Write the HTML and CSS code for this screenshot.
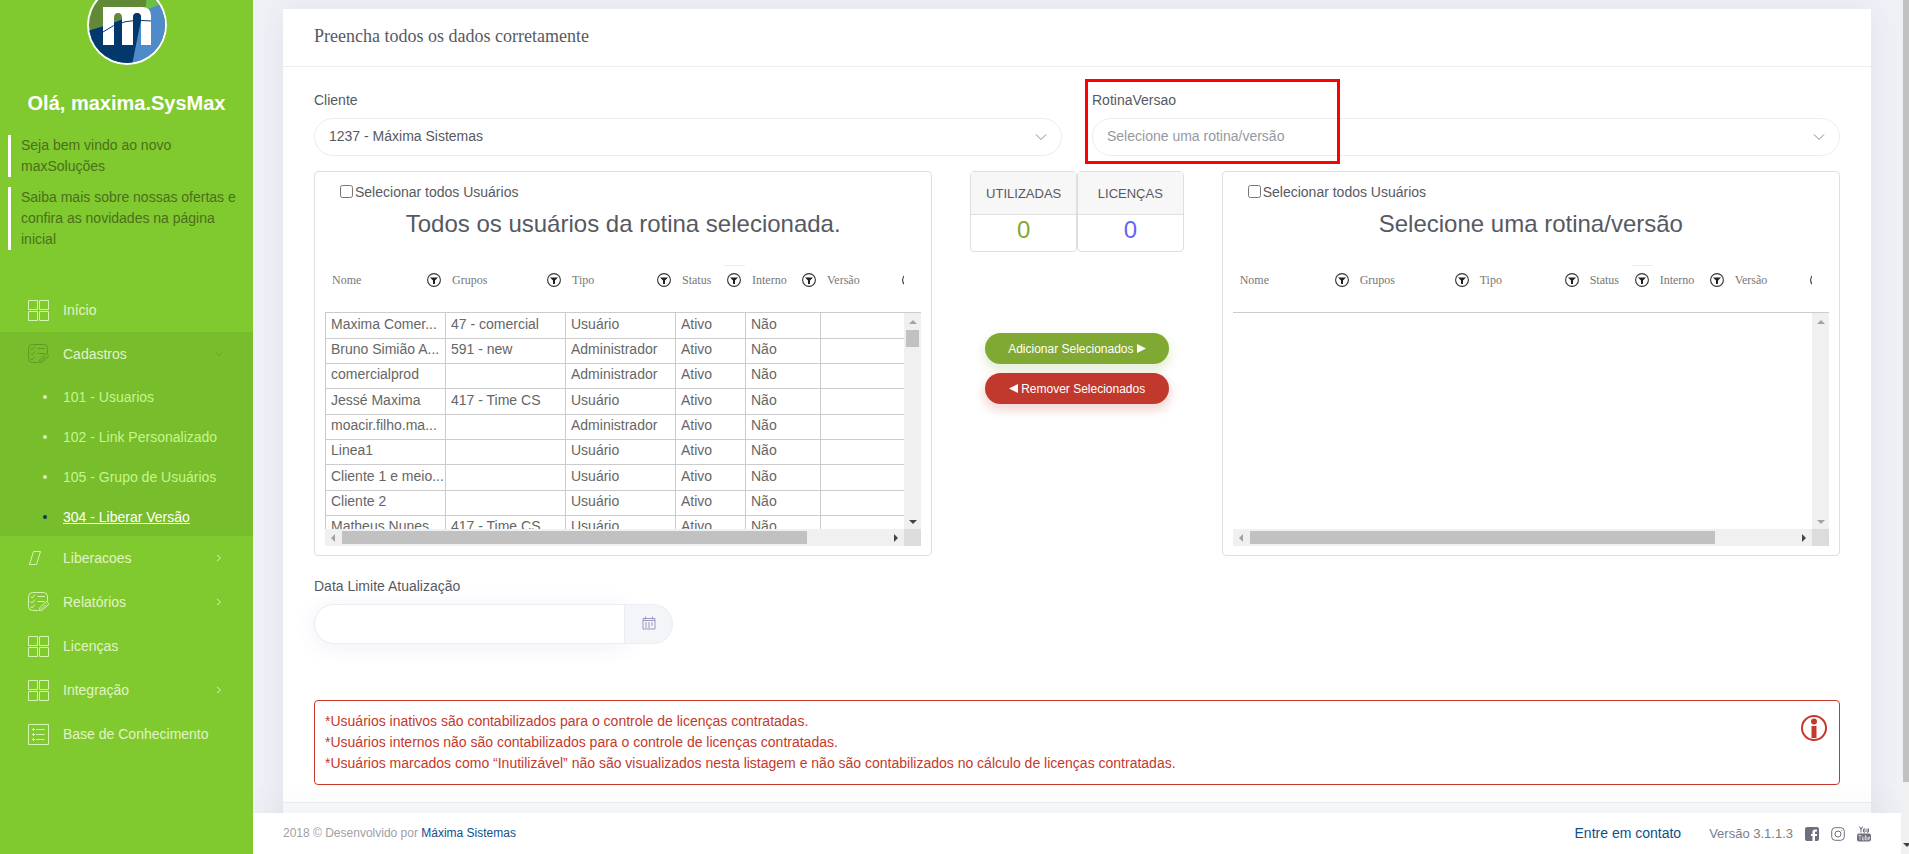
FILE: index.html
```html
<!DOCTYPE html>
<html lang="pt-BR">
  <head>
    <meta charset="UTF-8" />
    <meta name="viewport" content="width=device-width, initial-scale=1.0" />
    <title>304 - Liberar Versão</title>
    <link rel="stylesheet" href="styles.css" />
  </head>
  <body>
    <!-- Ícones reutilizados -->
    <svg class="sprite" aria-hidden="true">
      <symbol id="i-grid" viewBox="0 0 22 22">
        <path d="M1.500 1.500h9v9h-9zM12.500 1.500h9v9h-9zM1.500 12.500h9v9h-9zM12.500 12.500h9v9h-9z" />
      </symbol>
      <symbol id="i-check" viewBox="0 0 22 22">
        <path d="M20.500 10V5.500a4 4 0 0 0-4-4h-11a4 4 0 0 0-4 4v10a4 4 0 0 0 4 4h6M3.500 5.500l1.500 1.500 3-3.500M3.500 10.500l1.500 1.500 3-3.500M3.500 15.500l1.500 1.500 3-3.500M10.500 5.500h7.500M10.500 10.500h7M12.500 19.500l.5-3 5.500-5.500q1.500-1 2.500.5t0 2.500l-5.500 5zM14.500 18l4.500-4.500" />
      </symbol>
      <symbol id="i-slant" viewBox="0 0 22 22">
        <path d="M6.500 4.500h7l-4 13h-7z" />
      </symbol>
      <symbol id="i-list" viewBox="0 0 22 22">
        <path d="M1.500 1.500h20v20h-20zM5 6.500h3M9 6.500h8.500M5 11.500h3M9 11.500h8.500M5 16.500h3M9 16.500h8.500M6.500 5v3M6.500 10v3M6.500 15v3" />
      </symbol>
      <symbol id="i-right" viewBox="0 0 8 8">
        <path d="M2 1l3.500 3L2 7" />
      </symbol>
      <symbol id="i-down" viewBox="0 0 12 8">
        <path d="M1 1.500l5 5 5-5" />
      </symbol>
      <symbol id="i-filter" viewBox="0 0 14 14">
        <circle cx="7" cy="7" r="6.400" fill="none" stroke="#333" stroke-width="1.100" />
        <path d="M3 4.500h8L8 7.500V11H6V7.500z" fill="#222" />
      </symbol>
    </svg>

    <div class="app">
      <aside class="sidebar">
        <svg class="logo" viewBox="0 0 80 80" role="img" aria-label="Máxima">
          <defs>
            <clipPath id="disc"><circle cx="40" cy="40" r="38" /></clipPath>
          </defs>
          <circle cx="40" cy="40" r="40" fill="#fff" />
          <g clip-path="url(#disc)">
            <path d="M0 0h80v80H0z" fill="#628a36" />
            <path d="M61 0h19v22l-22 6z" fill="#6dbf45" />
            <path d="M0 47Q34 34 80 17v63H0z" fill="#4f8aca" />
            <path d="M0 46Q30 38 56 25L45 80H0z" fill="#02386c" />
          </g>
          <path d="M16 22H55q9 0 9 9v29H54V33q0-5-4-5t-4 5v27H35V33q0-5-4-5t-4 5v27H16z" fill="#fff" />
          <path d="M16 47Q36 32 64 36" fill="none" stroke="#02386c" />
          <path d="M46 60V33q0-5 4-5t4 5L48 60z" fill="#02386c" />
        </svg>
        <h2 class="hello">Olá, maxima.SysMax</h2>
        <p class="notice">Seja bem vindo ao novo maxSoluções</p>
        <p class="notice">Saiba mais sobre nossas ofertas e confira as novidades na página inicial</p>

        <nav class="menu">
          <a class="menu-item" href="#"><svg class="menu-icon"><use href="#i-grid" /></svg>Início</a>
          <div class="menu-open">
            <a class="menu-item" href="#"><svg class="menu-icon dark"><use href="#i-check" /></svg>Cadastros<svg class="arrow-down" viewBox="0 0 12 8"><use href="#i-down" /></svg></a>
            <a class="sub-item" href="#">101 - Usuarios</a>
            <a class="sub-item" href="#">102 - Link Personalizado</a>
            <a class="sub-item" href="#">105 - Grupo de Usuários</a>
            <a class="sub-item active" href="#">304 - Liberar Versão</a>
          </div>
          <a class="menu-item" href="#"><svg class="menu-icon"><use href="#i-slant" /></svg>Liberacoes<svg class="arrow"><use href="#i-right" /></svg></a>
          <a class="menu-item" href="#"><svg class="menu-icon"><use href="#i-check" /></svg>Relatórios<svg class="arrow"><use href="#i-right" /></svg></a>
          <a class="menu-item" href="#"><svg class="menu-icon"><use href="#i-grid" /></svg>Licenças</a>
          <a class="menu-item" href="#"><svg class="menu-icon"><use href="#i-grid" /></svg>Integração<svg class="arrow"><use href="#i-right" /></svg></a>
          <a class="menu-item" href="#"><svg class="menu-icon"><use href="#i-list" /></svg>Base de Conhecimento</a>
        </nav>
      </aside>

      <div class="page">
        <main class="content">
          <section class="card">
            <h3 class="card-title">Preencha todos os dados corretamente</h3>
            <form class="card-body">
              <div class="fields">
                <div class="field">
                  <label for="cliente">Cliente</label>
                  <div class="select-box">
                    <select id="cliente">
                      <option>1237 - Máxima Sistemas</option>
                    </select>
                    <svg class="select-arrow"><use href="#i-down" /></svg>
                  </div>
                </div>
                <div class="field">
                  <label for="rotina">RotinaVersao</label>
                  <div class="select-box">
                    <select id="rotina" class="empty">
                      <option>Selecione uma rotina/versão</option>
                    </select>
                    <svg class="select-arrow"><use href="#i-down" /></svg>
                  </div>
                  <div class="highlight"></div>
                </div>
              </div>

              <div class="row">
                <div class="col-5">
                  <div class="panel">
                    <label class="check"><input type="checkbox" />Selecionar todos Usuários</label>
                    <h4 class="panel-title">Todos os usuários da rotina selecionada.</h4>
                    <div class="grid">
                      <div class="grid-view">
                        <table class="users">
                          <colgroup>
                            <col class="w-120" /><col class="w-120" /><col class="w-110" /><col class="w-70" /><col class="w-75" /><col class="w-100" />
                          </colgroup>
                          <thead>
                            <tr>
                              <th><div class="th">Nome<svg><use href="#i-filter" /></svg></div></th>
                              <th><div class="th">Grupos<svg><use href="#i-filter" /></svg></div></th>
                              <th><div class="th">Tipo<svg><use href="#i-filter" /></svg></div></th>
                              <th><div class="th">Status<svg><use href="#i-filter" /></svg></div></th>
                              <th><div class="th">Interno<svg><use href="#i-filter" /></svg></div></th>
                              <th><div class="th">Versão<svg><use href="#i-filter" /></svg></div></th>
                            </tr>
                          </thead>
                          <tbody>
                            <tr><td>Maxima Comer...</td><td>47 - comercial</td><td>Usuário</td><td>Ativo</td><td>Não</td><td></td></tr>
                            <tr><td>Bruno Simião A...</td><td>591 - new</td><td>Administrador</td><td>Ativo</td><td>Não</td><td></td></tr>
                            <tr><td>comercialprod</td><td></td><td>Administrador</td><td>Ativo</td><td>Não</td><td></td></tr>
                            <tr><td>Jessé Maxima</td><td>417 - Time CS</td><td>Usuário</td><td>Ativo</td><td>Não</td><td></td></tr>
                            <tr><td>moacir.filho.ma...</td><td></td><td>Administrador</td><td>Ativo</td><td>Não</td><td></td></tr>
                            <tr><td>Linea1</td><td></td><td>Usuário</td><td>Ativo</td><td>Não</td><td></td></tr>
                            <tr><td>Cliente 1 e meio...</td><td></td><td>Usuário</td><td>Ativo</td><td>Não</td><td></td></tr>
                            <tr><td>Cliente 2</td><td></td><td>Usuário</td><td>Ativo</td><td>Não</td><td></td></tr>
                            <tr><td>Matheus Nunes</td><td>417 - Time CS</td><td>Usuário</td><td>Ativo</td><td>Não</td><td></td></tr>
                          </tbody>
                        </table>
                      </div>
                      <div class="bar-v">
                        <i class="tri up off"></i>
                        <div class="thumb-v"></div>
                        <i class="tri down"></i>
                      </div>
                      <div class="bar-h">
                        <i class="tri left off"></i>
                        <div class="thumb-h"></div>
                        <i class="tri right"></i>
                      </div>
                      <div class="corner"></div>
                    </div>
                  </div>
                </div>

                <div class="col-2">
                  <div class="counts">
                    <div class="count">
                      <div class="count-head">UTILIZADAS</div>
                      <div class="count-value used">0</div>
                    </div>
                    <div class="count">
                      <div class="count-head">LICENÇAS</div>
                      <div class="count-value total">0</div>
                    </div>
                  </div>
                  <div class="actions">
                    <button type="button" class="btn add">Adicionar Selecionados <svg viewBox="0 0 9 9"><path d="M0 0l9 4.500L0 9z" /></svg></button>
                    <button type="button" class="btn remove"><svg viewBox="0 0 9 9"><path d="M9 0L0 4.500 9 9z" /></svg> Remover Selecionados</button>
                  </div>
                </div>

                <div class="col-5">
                  <div class="panel">
                    <label class="check"><input type="checkbox" />Selecionar todos Usuários</label>
                    <h4 class="panel-title">Selecione uma rotina/versão</h4>
                    <div class="grid">
                      <div class="grid-view">
                        <table class="users">
                          <colgroup>
                            <col class="w-120" /><col class="w-120" /><col class="w-110" /><col class="w-70" /><col class="w-75" /><col class="w-100" />
                          </colgroup>
                          <thead>
                            <tr>
                              <th><div class="th">Nome<svg><use href="#i-filter" /></svg></div></th>
                              <th><div class="th">Grupos<svg><use href="#i-filter" /></svg></div></th>
                              <th><div class="th">Tipo<svg><use href="#i-filter" /></svg></div></th>
                              <th><div class="th">Status<svg><use href="#i-filter" /></svg></div></th>
                              <th><div class="th">Interno<svg><use href="#i-filter" /></svg></div></th>
                              <th><div class="th">Versão<svg><use href="#i-filter" /></svg></div></th>
                            </tr>
                          </thead>
                        </table>
                      </div>
                      <div class="bar-v">
                        <i class="tri up off"></i>
                        <i class="tri down off"></i>
                      </div>
                      <div class="bar-h">
                        <i class="tri left off"></i>
                        <div class="thumb-h"></div>
                        <i class="tri right"></i>
                      </div>
                      <div class="corner"></div>
                    </div>
                  </div>
                </div>
              </div>

              <div class="date-field">
                <label for="data">Data Limite Atualização</label>
                <div class="date-group">
                  <input type="text" id="data" />
                  <button type="button" class="date-btn" aria-label="Abrir calendário">
                    <svg viewBox="0 0 14 14">
                      <path d="M1 2.500h12v10.500H1zM1 4.500h12M3.500 .5v3M10.500 .5v3" />
                      <path class="dots" d="M3 7h8M3 9h8M3 11h6" />
                    </svg>
                  </button>
                </div>
              </div>

              <div class="alert">
                <div>
                  <p>*Usuários inativos são contabilizados para o controle de licenças contratadas.</p>
                  <p>*Usuários internos não são contabilizados para o controle de licenças contratadas.</p>
                  <p>*Usuários marcados como “Inutilizável” não são visualizados nesta listagem e não são contabilizados no cálculo de licenças contratadas.</p>
                </div>
                <svg class="info" viewBox="0 0 26 26">
                  <circle cx="13" cy="13" r="12" fill="none" stroke="#c5392c" stroke-width="2" />
                  <circle cx="13" cy="6.500" r="3" />
                  <path d="M10.500 11h5v12h-5z" />
                </svg>
              </div>
            </form>
            <div class="card-foot"></div>
          </section>
        </main>

        <footer class="footer">
          <span class="copy">2018 © Desenvolvido por <a href="#">Máxima Sistemas</a></span>
          <a class="contact" href="#">Entre em contato</a>
          <span class="version">Versão 3.1.1.3</span>
          <a class="social" href="#" aria-label="Facebook">
            <svg viewBox="0 0 14 14"><path d="M2 0h10q2 0 2 2v10q0 2-2 2h-2V9h2V7h-2V5.500q0-1 1-1h1v-2h-2q-2.500 0-2.500 2.500V7H6v2h1.500v5H2q-2 0-2-2V2q0-2 2-2z" /></svg>
          </a>
          <a class="social" href="#" aria-label="Instagram">
            <svg class="line" viewBox="0 0 14 14"><rect x=".7" y=".7" width="12.600" height="12.600" rx="3.500" /><circle cx="7" cy="7" r="3" /><path d="M10.300 3.500h.8" /></svg>
          </a>
          <a class="social" href="#" aria-label="YouTube">
            <svg viewBox="0 0 14 16">
              <path d="M2 7.500h10q2 0 2 2v4q0 2-2 2H2q-2 0-2-2v-4q0-2 2-2z" />
              <path class="thin" d="M2.500 .5l1.500 3 1.500-3M4 3.500v3M6.500 3q1-1 1.500 0v3q-1 1-1.500 0zM10 2.500v3.500q1 1 1.500 0V2.500" />
              <path class="cut" d="M1.500 9.500h3M3 9.500v4.500M5.500 10.500v3.500h1.500v-3.500M8.500 9v5h1.500v-3h-1.500M12.500 14h-1v-3h1v1.500h-1" />
            </svg>
          </a>
        </footer>
      </div>

      <div class="page-bar"><div class="page-thumb"></div><i class="tri down"></i></div>
    </div>
  </body>
</html>
```

FILE: styles.css
```css
* {
  box-sizing: border-box;
}

body {
  margin: 0;
  font-family: "Liberation Sans", Arial, sans-serif;
  font-size: 14px;
  line-height: 21px;
  color: #575962;
  background: #f0f1f7;
}

h2,
h3,
h4,
p {
  margin: 0;
  font-weight: normal;
}

a {
  text-decoration: none;
}

button,
input,
select {
  font-family: inherit;
  font-size: inherit;
  color: inherit;
}

.sprite {
  display: none;
}

.app {
  display: grid;
  grid-template-columns: 253px 1fr 8px;
  height: 100vh;
  overflow: hidden;
}

/* Menu lateral */
.sidebar {
  position: relative;
  z-index: 1;
  background: #80c92f;
  overflow: hidden;
}

.logo {
  display: block;
  width: 80px;
  height: 80px;
  margin: -15px auto 0;
}

.hello {
  margin: 22px 0 16px;
  font-size: 20px;
  line-height: 32px;
  font-weight: bold;
  text-align: center;
  color: #fff;
}

.notice {
  margin: 0 8px 10px;
  padding-left: 10px;
  border-left: 3px solid #fff;
  color: #4a701c;
}

.menu {
  margin-top: 38px;
}

.menu-item {
  display: flex;
  align-items: center;
  height: 44px;
  padding: 0 30px 0 27px;
  color: #e0f4c6;
}

.menu-icon {
  width: 22px;
  height: 22px;
  margin-right: 14px;
  fill: none;
  stroke: #d6f3b4;
}

.menu-icon.dark {
  stroke: #5f9b22;
}

.arrow,
.arrow-down {
  width: 8px;
  height: 8px;
  margin-left: auto;
  fill: none;
  stroke: #d6f3b4;
}

.arrow-down {
  stroke: #5f9b22;
}

.menu-open {
  background: #77bd2c;
}

.sub-item {
  display: flex;
  align-items: center;
  height: 40px;
  padding: 2px 0 0 43px;
  color: #c8f58c;
}

.sub-item::before {
  content: "";
  width: 4px;
  height: 4px;
  margin-right: 16px;
  border-radius: 50%;
  background: #d6f3b4;
}

.sub-item.active {
  color: #fff;
  text-decoration: underline;
}

.sub-item.active::before {
  background: #02386c;
}

/* Página */
.page {
  display: flex;
  flex-direction: column;
  min-width: 0;
  min-height: 0;
}

.content {
  flex: 1;
  min-height: 0;
  padding: 9px 30px 0;
  overflow: hidden;
}

.card {
  background: #fff;
  box-shadow: 0 0 30px rgba(69, 65, 78, 0.08);
}

.card-title {
  padding: 16px 31px 19px;
  border-bottom: 1px solid #ebedf2;
  font-family: "Liberation Serif", serif;
  font-size: 18px;
  line-height: 22px;
}

.card-body {
  padding: 23px 31px 17px;
}

.fields {
  display: grid;
  grid-template-columns: 1fr 1fr;
  gap: 30px;
  margin-bottom: 15px;
}

.field {
  position: relative;
}

.field label,
.date-field label {
  display: block;
  margin-bottom: 7px;
}

.select-box {
  position: relative;
}

select {
  width: 100%;
  height: 38px;
  padding: 0 14px 2px;
  border: 1px solid #ebedf2;
  border-radius: 19px;
  background: #fff;
  appearance: none;
}

select.empty {
  color: #9699a2;
}

.select-arrow {
  position: absolute;
  right: 15px;
  top: 15px;
  width: 12px;
  height: 8px;
  fill: none;
  stroke: #8d8a7c;
  pointer-events: none;
}

.highlight {
  position: absolute;
  left: -7px;
  top: -11px;
  width: 255px;
  height: 85px;
  border: 3px solid #f00;
  pointer-events: none;
}

.row {
  display: flex;
  margin: 0 -15px;
}

.col-5 {
  flex: none;
  width: calc(100% * 5 / 12);
  padding: 0 15px;
}

.col-2 {
  flex: 1;
  padding: 0 23px;
}

.panel {
  padding: 10px 10px 9px;
  border: 1px solid #dfdfdf;
  border-radius: 4px;
}

.check {
  display: flex;
  align-items: center;
  padding-left: 15px;
}

.check input {
  width: 13px;
  height: 13px;
  margin: 0 2px 2px 0;
}

.panel-title {
  margin: 3px 0 23px;
  font-size: 24px;
  line-height: 36px;
  text-align: center;
}

.grid {
  display: grid;
  grid-template-columns: 1fr 17px;
  grid-template-rows: 264px 17px;
}

.grid-view {
  overflow: hidden;
}

.users {
  table-layout: fixed;
  width: 595px;
  border-collapse: separate;
  border-spacing: 0;
}

.w-120 {
  width: 120px;
}

.w-110 {
  width: 110px;
}

.w-100 {
  width: 100px;
}

.w-75 {
  width: 75px;
}

.w-70 {
  width: 70px;
}

.users th {
  height: 48px;
  padding: 0;
  border-bottom: 1px solid #ccc;
  vertical-align: top;
  font-family: "Liberation Serif", serif;
  font-size: 12px;
  font-weight: normal;
  line-height: 14px;
  color: #777;
}

.th {
  display: flex;
  justify-content: space-between;
  padding: 8px 4px 0 7px;
}

/* Filtro em foco na coluna Status */
.users th:nth-child(4) {
  background: linear-gradient(#ececec, #ececec) right top / 21px 1px no-repeat;
}

.th svg {
  width: 14px;
  height: 14px;
}

.users td {
  height: 25px;
  padding: 0 5px 4px;
  border-bottom: 1px solid #ccc;
  border-left: 1px solid #ccc;
  line-height: 20px;
  white-space: nowrap;
  color: #666;
}

.users tr:nth-child(3n + 1) td {
  height: 26px;
}

/* Barras de rolagem */
.bar-v {
  display: flex;
  flex-direction: column;
  align-items: center;
  margin-top: 47px;
  padding: 7px 0 5px;
  border-top: 1px solid #ccc;
  background: #f0f0f0;
}

.thumb-v {
  width: 13px;
  height: 17px;
  margin-top: 6px;
  background: #c1c1c1;
}

.bar-h {
  display: flex;
  align-items: center;
  padding: 0 6px;
  background: #f0f0f0;
}

.thumb-h {
  width: 82%;
  height: 13px;
  margin-left: 7px;
  background: #c1c1c1;
}

.corner {
  background: #dcdcdc;
}

.tri {
  flex: none;
  border: 4px solid transparent;
  color: #444;
}

.tri.off {
  color: #a3a3a3;
}

.tri.up {
  border-top: 0;
  border-bottom-color: currentColor;
}

.tri.down {
  margin-top: auto;
  border-bottom: 0;
  border-top-color: currentColor;
}

.tri.left {
  border-left: 0;
  border-right-color: currentColor;
}

.tri.right {
  margin-left: auto;
  border-right: 0;
  border-left-color: currentColor;
}

/* Contadores */
.counts {
  display: flex;
}

.count {
  flex: 1;
  border: 1px solid #dfdfdf;
  border-radius: 4px;
  text-align: center;
}

.count-head {
  padding: 11px 0 10px;
  border-bottom: 1px solid #dfdfdf;
  background: #f7f7f7;
  font-size: 13px;
}

.count-value {
  padding-bottom: 6px;
  font-size: 24px;
  line-height: 30px;
}

.used {
  color: #80a934;
}

.total {
  color: #6464f5;
}

.actions {
  display: flex;
  flex-direction: column;
  gap: 9px;
  padding: 81px 15px 0;
}

.btn {
  height: 31px;
  padding: 0;
  border: 0;
  border-radius: 16px;
  font-size: 12px;
  color: #fff;
}

.btn svg {
  width: 9px;
  height: 9px;
  fill: #fff;
}

.add {
  background: #80a934;
  box-shadow: 0 5px 10px 2px rgba(128, 169, 52, 0.19);
}

.remove {
  background: #c1392c;
  box-shadow: 0 5px 10px 2px rgba(193, 57, 44, 0.19);
}

/* Data */
.date-field {
  width: 359px;
  margin-top: 20px;
}

.date-group {
  display: flex;
  height: 40px;
  border-radius: 20px;
}

.date-group input {
  flex: 1;
  min-width: 0;
  padding: 0 14px;
  border: 1px solid #ebedf2;
  border-radius: 20px 0 0 20px;
  box-shadow: 0 3px 20px rgba(113, 106, 202, 0.11);
}

.date-btn {
  width: 48px;
  padding: 0;
  border: 1px solid #ebedf2;
  border-left: 0;
  border-radius: 0 20px 20px 0;
  background: #f4f5f8;
}

.date-btn svg {
  width: 14px;
  height: 14px;
  fill: none;
  stroke: #9a9ac0;
}

.date-btn .dots {
  stroke-dasharray: 2 1;
}

/* Aviso */
.alert {
  display: flex;
  justify-content: space-between;
  margin-top: 56px;
  padding: 10px 12px 10px 10px;
  border: 1px solid #c5392c;
  border-radius: 4px;
  color: #c5392c;
}

.info {
  width: 26px;
  height: 26px;
  margin-top: 4px;
  fill: #c5392c;
}

.card-foot {
  height: 70px;
  border-top: 1px solid #ebedf2;
  background: #f9fafc;
}

/* Rodapé */
.footer {
  display: flex;
  align-items: center;
  height: 41px;
  padding: 0 30px;
  background: #fff;
  box-shadow: 0 0 40px rgba(69, 65, 78, 0.06);
}

.footer a {
  color: #0f4f8b;
}

.copy {
  margin-right: auto;
  font-size: 12px;
  color: #a0a0a6;
}

.version {
  margin-left: 28px;
  font-size: 13px;
  color: #7b7e8a;
}

.social {
  display: flex;
  width: 14px;
  margin-left: 12px;
}

.social svg {
  width: 14px;
  fill: #716f7e;
}

.social .line,
.social .thin {
  fill: none;
  stroke: #716f7e;
}

.social .cut {
  fill: none;
  stroke: #fff;
  stroke-width: 0.6;
}

.page-bar {
  display: flex;
  flex-direction: column;
  padding: 0 0 7px 2px;
  overflow: hidden;
  background: #f0f0f0;
}

.page-thumb {
  height: 782px;
  background: #c1c1c1;
}
```
